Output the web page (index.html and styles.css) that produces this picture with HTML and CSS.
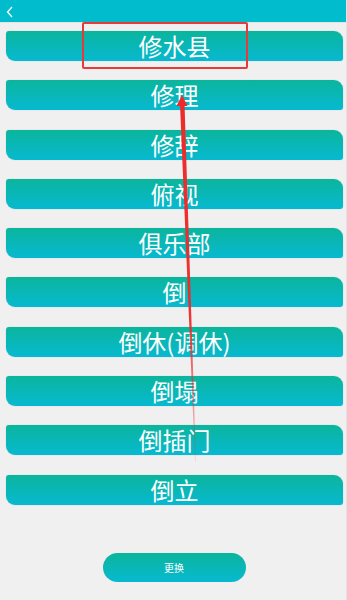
FILE: index.html
```html
<!DOCTYPE html>
<html lang="zh">
<head>
<meta charset="utf-8">
<link rel="stylesheet" href="styles.css">
</head>
<body>
<div class="page">
  <header class="topbar">
    <svg class="back" width="8" height="12" viewBox="0 0 8 12"><polyline points="6,1 1.5,6 6,11" fill="none" stroke="#ffffff" stroke-width="1.3"/></svg>
  </header>
  <ul class="list">
    <li class="item">修水县</li>
    <li class="item">修理</li>
    <li class="item">修辞</li>
    <li class="item">俯视</li>
    <li class="item">俱乐部</li>
    <li class="item">倒</li>
    <li class="item">倒休(调休)</li>
    <li class="item">倒塌</li>
    <li class="item">倒插门</li>
    <li class="item">倒立</li>
  </ul>
  <div class="footer">
    <button class="change">更换</button>
  </div>
  <div class="highlight"></div>
  <svg class="arrow" width="347" height="600" viewBox="0 0 347 600">
    <defs>
      <linearGradient id="fade" x1="0" y1="0" x2="0" y2="1">
        <stop offset="0" stop-color="#ee2a2a" stop-opacity="1"/>
        <stop offset="0.6" stop-color="#ee2a2a" stop-opacity="0.95"/>
        <stop offset="1" stop-color="#ee2a2a" stop-opacity="0.1"/>
      </linearGradient>
    </defs>
    <polygon points="180,104 184.5,104 196,462 195,462" fill="url(#fade)"/>
    <polygon points="182,95 176.5,106 187.5,106" fill="#ee2a2a"/>
  </svg>
</div>
</body>
</html>
```
FILE: styles.css
```css
* { box-sizing: border-box; }
html, body { margin: 0; padding: 0; }
body {
  background: #f0f0f0;
  font-family: "Noto Sans CJK SC", "Noto Sans", sans-serif;
}
.page {
  position: relative;
  width: 347px;
  height: 600px;
  overflow: hidden;
  background: #f0f0f0;
  border-right: 1px solid #e2e2e2;
}
.topbar {
  height: 23px;
  background: #00bccd;
  border-bottom: 1px solid #dfe6e8;
  display: flex;
  align-items: center;
  padding-left: 6px;
}
.back { display: block; margin-top: 1px; }
.list {
  list-style: none;
  margin: 0;
  padding: 8px 3px 0 6px;
  display: flex;
  flex-direction: column;
  gap: 19.3px;
}
.item {
  height: 30px;
  border-radius: 3px 9px 3px 9px;
  background: linear-gradient(to bottom, #0bb59c, #07b9d1);
  color: #ffffff;
  font-size: 24px;
  line-height: 29px;
  text-align: center;
  box-shadow: 0 0 1px rgba(0, 120, 130, 0.4);
}
.footer {
  display: flex;
  justify-content: center;
  padding-top: 48px;
  padding-left: 2px;
}
.change {
  width: 143px;
  height: 29px;
  border: none;
  border-radius: 15px;
  background: linear-gradient(to bottom, #0bb59c, #07b9d1);
  color: #ffffff;
  font-family: "Noto Sans CJK SC", sans-serif;
  font-size: 10px;
  padding: 0;
}
.highlight {
  position: absolute;
  left: 82px;
  top: 22px;
  width: 166px;
  height: 47px;
  border: 2px solid #e8393b;
  border-radius: 2px;
}
.arrow {
  position: absolute;
  left: 0;
  top: 0;
  pointer-events: none;
}
```
